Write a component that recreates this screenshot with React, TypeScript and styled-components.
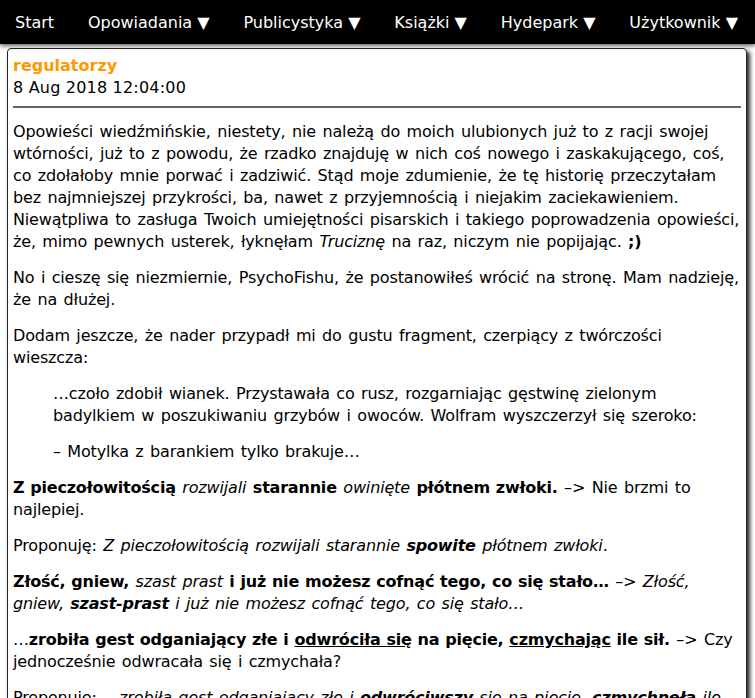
import React from "react";
import styled, { createGlobalStyle } from "styled-components";

const Global = createGlobalStyle`
  html, body { margin: 0; padding: 0; background: #fff; }
  body { font-family: "DejaVu Sans", Verdana, sans-serif; font-size: 16px; color: #000; }
`;

const Nav = styled.nav`
  background: #000;
  height: 44px;
  display: flex;
  align-items: center;
  justify-content: space-between;
  padding: 0 17px 0 15px;
  box-shadow: 0 2px 4px rgba(0, 0, 0, 0.6);
  position: relative;
  z-index: 1;
`;

const NavItem = styled.a`
  color: #fff;
  font-size: 16px;
  text-decoration: none;
  white-space: nowrap;
`;

const Card = styled.article`
  margin: 4px 8px 0 7px;
  border: 1px solid #222;
  border-radius: 4px;
  box-shadow: 3px 3px 4px rgba(0, 0, 0, 0.85);
  padding: 6px 5px 10px 5px;
  line-height: 22px;
`;

const Author = styled.div`
  color: #ff9900;
  font-weight: bold;
`;

const DateLine = styled.div`
  letter-spacing: 0.2px;
`;

const Rule = styled.hr`
  border: none;
  border-top: 2px solid #666;
  margin: 7px 0 13px;
`;

const Body = styled.div`
  letter-spacing: -0.15px;
  word-spacing: 1.52px;
`;

const P = styled.p`
  margin: 0 0 14px;
`;

const Quote = styled.blockquote`
  margin: 0 0 14px 40px;
`;

const B = styled.b`
  font-weight: bold;
  letter-spacing: -0.2px;
  word-spacing: 0.5px;
`;

const U = styled.span`
  text-decoration: underline;
`;

export default function App() {
  const items = ["Start", "Opowiadania ▼", "Publicystyka ▼", "Książki ▼", "Hydepark ▼", "Użytkownik ▼"];
  return (
    <>
      <Global />
      <Nav>
        {items.map((t) => (
          <NavItem key={t} href="#">{t}</NavItem>
        ))}
      </Nav>
      <Card>
        <Author>regulatorzy</Author>
        <DateLine>8 Aug 2018 12:04:00</DateLine>
        <Rule />
        <Body>
          <P>
            Opowieści wiedźmińskie, niestety, nie należą do moich ulubionych już to z racji swojej wtórności, już to z powodu, że rzadko znajduję w nich coś nowego i zaskakującego, coś, co zdołałoby mnie porwać i zadziwić. Stąd moje zdumienie, że tę historię przeczytałam bez najmniejszej przykrości, ba, nawet z przyjemnością i niejakim zaciekawieniem. Niewątpliwa to zasługa Twoich umiejętności pisarskich i takiego poprowadzenia opowieści, że, mimo pewnych usterek, łyknęłam <i>Truciznę</i> na raz, niczym nie popijając. <B>;)</B>
          </P>
          <P>
            No i cieszę się niezmiernie, PsychoFishu, że postanowiłeś wrócić na stronę. Mam nadzieję, że na dłużej.
          </P>
          <P>Dodam jeszcze, że nader przypadł mi do gustu fragment, czerpiący z twórczości wieszcza:</P>
          <Quote>
            <P>…czoło zdobił wianek. Przystawała co rusz, rozgarniając gęstwinę zielonym badylkiem w poszukiwaniu grzybów i owoców. Wolfram wyszczerzył się szeroko:</P>
            <P>– Motylka z barankiem tylko brakuje…</P>
          </Quote>
          <P>
            <B>Z pieczołowitością</B> <i>rozwijali</i> <B>starannie</B> <i>owinięte</i> <B>płótnem zwłoki.</B> –&gt; Nie brzmi to najlepiej.
          </P>
          <P>
            Proponuję: <i>Z pieczołowitością rozwijali starannie <B>spowite</B> płótnem zwłoki</i>.
          </P>
          <P>
            <B>Złość, gniew,</B> <i>szast prast</i> <B>i już nie możesz cofnąć tego, co się stało…</B> –&gt; <i>Złość, gniew, <B>szast-prast</B> i już nie możesz cofnąć tego, co się stało…</i>
          </P>
          <P>
            …<B>zrobiła gest odganiający złe i <U>odwróciła się</U> na pięcie, <U>czmychając</U> ile sił.</B> –&gt; Czy jednocześnie odwracała się i czmychała?
          </P>
          <P>
            Proponuję: <i>…zrobiła gest odganiający złe i <B>odwróciwszy</B> się na pięcie, <B>czmychnęła</B> ile sił.</i>
          </P>
        </Body>
      </Card>
    </>
  );
}
